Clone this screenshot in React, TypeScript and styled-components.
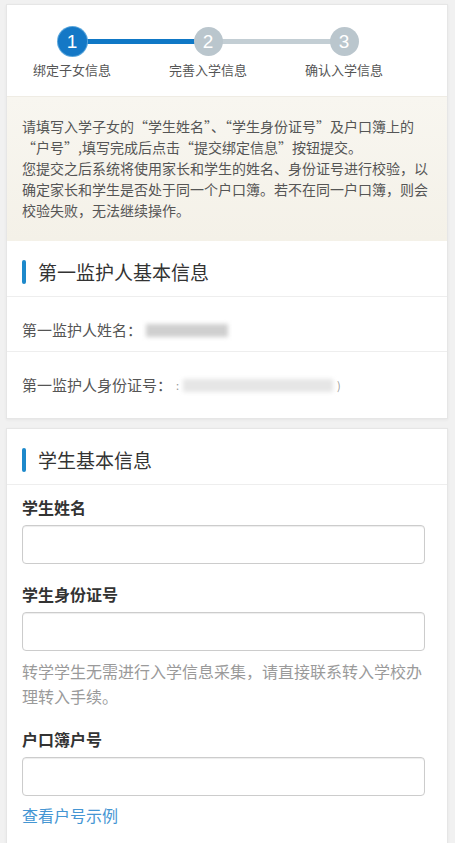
import React from 'react';
import styled, { createGlobalStyle } from 'styled-components';

const Global = createGlobalStyle`
  html, body { margin: 0; padding: 0; background: #f1f1f1; }
  body { font-family: "Noto Sans CJK SC", "Noto Sans", sans-serif; }
  * { box-sizing: border-box; }
`;

const Page = styled.div`
  padding: 4px 7px 0 6px;
  display: flex;
  flex-direction: column;
  gap: 9px;
`;

const Card = styled.section`
  background: #fff;
  border: 1px solid #e6e6e6;
  box-shadow: 0 1px 3px rgba(0, 0, 0, 0.05);
`;

const Steps = styled.ol`
  list-style: none;
  margin: 0;
  padding: 22px 0 17px 26px;
  display: grid;
  grid-template-columns: repeat(3, 78px);
  column-gap: 58px;
`;

const Step = styled.li<{ $line?: 'active' | 'idle' }>`
  position: relative;
  display: flex;
  flex-direction: column;
  align-items: center;
  gap: 5px;
  &::before {
    content: '';
    display: ${(p) => (p.$line ? 'block' : 'none')};
    position: absolute;
    top: 12px;
    left: 50%;
    width: calc(100% + 58px);
    height: 5px;
    background: ${(p) => (p.$line === 'active' ? '#0f78c6' : '#c3ced4')};
  }
`;

const Circle = styled.span<{ $active: boolean }>`
  position: relative;
  z-index: 1;
  width: 29px;
  height: 29px;
  border-radius: 50%;
  background: ${(p) => (p.$active ? '#1478c6' : '#bac6cd')};
  box-shadow: ${(p) => (p.$active ? '0 0 0 1px #5aa6dc' : 'none')};
  color: #fff;
  font: 19px/29px "Liberation Sans", Arial, sans-serif;
  text-align: center;
`;

const StepLabel = styled.span`
  font-size: 13px;
  line-height: 18px;
  color: #555;
  white-space: nowrap;
`;

const Notice = styled.div`
  background: linear-gradient(180deg, #f8f6f0 0%, #f4f1e8 100%);
  border-top: 1px solid #efece4;
  padding: 19px 15px 20px;
  font-size: 14px;
  line-height: 21px;
  color: #555;
`;

const SectionHeader = styled.h2`
  margin: 0;
  display: flex;
  align-items: center;
  gap: 12px;
  padding: 19px 15px 12px;
  border-bottom: 1px solid #eee;
  font-size: 19px;
  line-height: 24px;
  font-weight: normal;
  color: #333;
  &::before {
    content: '';
    width: 4px;
    height: 24px;
    border-radius: 2px;
    background: #1d89cb;
  }
`;

const InfoList = styled.div`
  padding-bottom: 12px;
`;

const InfoRow = styled.div`
  display: flex;
  align-items: center;
  padding: 22px 15px 10px;
  font-size: 15px;
  line-height: 22px;
  color: #555;
  & + & {
    border-top: 1px solid #eee;
  }
`;

const Redacted = styled.span<{ $w: number; $tone: string }>`
  display: inline-block;
  width: ${(p) => p.$w}px;
  height: 13px;
  margin-left: 4px;
  background: ${(p) => p.$tone};
  filter: blur(2px);
`;

const Faint = styled.span`
  color: #999;
  font-size: 11px;
  margin-left: 4px;
`;

const Form = styled.div`
  padding: 11px 22px 40px 15px;
  display: flex;
  flex-direction: column;
`;

const Field = styled.div`
  display: flex;
  flex-direction: column;
  & + & {
    margin-top: 19px;
  }
`;

const Label = styled.label`
  font-size: 16px;
  line-height: 22px;
  font-weight: bold;
  color: #333;
  margin-bottom: 7px;
`;

const Input = styled.input`
  height: 39px;
  width: 100%;
  border: 1px solid #ccc;
  border-radius: 4px;
  box-shadow: inset 0 1px 1px rgba(0, 0, 0, 0.075);
  padding: 6px 12px;
  font-size: 15px;
  outline: none;
  background: #fff;
`;

const Help = styled.p`
  margin: 8px 0 0;
  font-size: 16px;
  line-height: 25px;
  color: #9a9a9a;
`;

const Link = styled.a`
  margin-top: 8px;
  font-size: 16px;
  line-height: 22px;
  color: #4596d3;
  text-decoration: none;
`;

export default function App() {
  return (
    <>
      <Global />
      <Page lang="zh-CN">
        <Card>
          <Steps>
            <Step $line="active">
              <Circle $active>1</Circle>
              <StepLabel>绑定子女信息</StepLabel>
            </Step>
            <Step $line="idle">
              <Circle $active={false}>2</Circle>
              <StepLabel>完善入学信息</StepLabel>
            </Step>
            <Step>
              <Circle $active={false}>3</Circle>
              <StepLabel>确认入学信息</StepLabel>
            </Step>
          </Steps>
          <Notice>
            请填写入学子女的“学生姓名”、“学生身份证号”及户口簿上的“户号”,填写完成后点击“提交绑定信息”按钮提交。
            <br />
            您提交之后系统将使用家长和学生的姓名、身份证号进行校验，以确定家长和学生是否处于同一个户口簿。若不在同一户口簿，则会校验失败，无法继续操作。
          </Notice>
          <SectionHeader>第一监护人基本信息</SectionHeader>
          <InfoList>
            <InfoRow>
              第一监护人姓名：
              <Redacted $w={82} $tone="#cfcfcf" />
            </InfoRow>
            <InfoRow>
              第一监护人身份证号：
              <Faint>:</Faint>
              <Redacted $w={150} $tone="#e6e6e6" />
              <Faint>)</Faint>
            </InfoRow>
          </InfoList>
        </Card>
        <Card>
          <SectionHeader>学生基本信息</SectionHeader>
          <Form>
            <Field>
              <Label>学生姓名</Label>
              <Input type="text" />
            </Field>
            <Field>
              <Label>学生身份证号</Label>
              <Input type="text" />
              <Help>转学学生无需进行入学信息采集，请直接联系转入学校办理转入手续。</Help>
            </Field>
            <Field>
              <Label>户口簿户号</Label>
              <Input type="text" />
              <Link href="#">查看户号示例</Link>
            </Field>
          </Form>
        </Card>
      </Page>
    </>
  );
}
